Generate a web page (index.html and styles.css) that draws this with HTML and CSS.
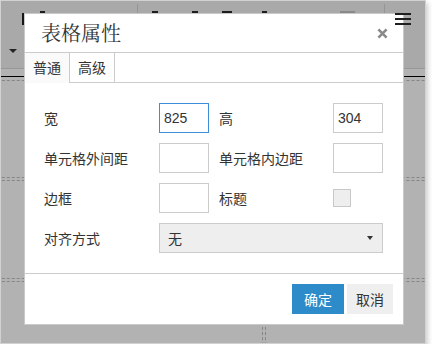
FILE: index.html
```html
<!DOCTYPE html>
<html lang="zh-CN">
<head>
<meta charset="utf-8">
<title>表格属性</title>
<link rel="stylesheet" href="styles.css">
</head>
<body>
<div class="editor">
  <div class="toolbar">
    <div class="tb-left">
      <span class="ibar"></span>
      <span class="caret"></span>
    </div>
    <span class="mark m1"></span>
    <span class="sep s1"></span>
    <span class="mark m2"></span>
    <span class="mark m3"></span>
    <span class="mark m4"></span>
    <span class="mark m5"></span>
    <span class="mark m6"></span>
    <span class="sep s2"></span>
    <span class="menu-icon"><i></i><i></i><i></i></span>
  </div>
  <div class="content">
    <div class="hr"></div>
    <table class="bg-table">
      <tr class="r1"><td class="c1"></td><td class="c2"></td></tr>
      <tr class="r2"><td></td><td></td></tr>
      <tr class="r3"><td></td><td></td></tr>
    </table>
  </div>
  <div class="mask"></div>
  <div class="dialog">
    <div class="dlg-head">
      <span class="dlg-title">表格属性</span>
      <span class="dlg-close"><svg width="11" height="11" viewBox="0 0 11 11"><path d="M1.4 1.4L9.6 9.6M9.6 1.4L1.4 9.6" stroke="#8a8a8a" stroke-width="2.6"/></svg></span>
    </div>
    <div class="tabs">
      <span class="tab active">普通</span>
      <span class="tab">高级</span>
    </div>
    <div class="dlg-body">
      <div class="form">
        <label class="lbl">宽</label>
        <input class="inp focus" value="825">
        <label class="lbl l2">高</label>
        <input class="inp" value="304">

        <label class="lbl">单元格外间距</label>
        <input class="inp" value="">
        <label class="lbl l2">单元格内边距</label>
        <input class="inp" value="">

        <label class="lbl">边框</label>
        <input class="inp" value="">
        <label class="lbl l2">标题</label>
        <span class="chk"></span>

        <label class="lbl">对齐方式</label>
        <div class="select"><span>无</span><span class="sel-caret"></span></div>
      </div>
    </div>
    <div class="dlg-foot">
      <button class="btn primary">确定</button>
      <button class="btn">取消</button>
    </div>
  </div>
</div>
</body>
</html>
```

FILE: styles.css
```css
* { box-sizing: border-box; }
html, body { margin: 0; padding: 0; background: #fff; }
body {
  font-family: "Noto Sans CJK SC", "Liberation Sans", sans-serif;
  font-size: 14px;
  color: #333;
}

.editor {
  position: relative;
  width: 426px;
  height: 344px;
  border: 1px solid #d2d2d2;
  overflow: hidden;
  background: #fff;
  box-shadow: 2px 3px 5px rgba(0, 0, 0, 0.2);
}

/* toolbar behind the mask */
.toolbar {
  display: flex;
  align-items: flex-start;
  height: 68px;
  background: #f3f3f3;
  border-bottom: 1px solid #d9d9d9;
}
.tb-left { display: flex; flex-direction: column; width: 24px; }
.ibar { margin: 12px 0 0 21px; width: 2px; height: 12px; background: #222; }
.caret {
  margin: 24px 0 0 8px;
  width: 0; height: 0;
  border-top: 4px solid #333;
  border-left: 4px solid transparent;
  border-right: 4px solid transparent;
}
.mark { margin-top: 10px; height: 10px; background: #2a2a2a; }
.m1 { margin-left: 15px; width: 5px; }
.m2 { margin-left: 14px; width: 6px; }
.m3 { margin-left: 34px; width: 6px; }
.m4 { margin-left: 24px; width: 10px; }
.m5 { margin-left: 30px; width: 5px; }
.m6 { margin-left: 73px; width: 15px; background: #c4c4c4; }
.sep { margin-top: 3px; width: 1px; height: 30px; background: #d6d6d6; }
.s1 { margin-left: 92px; }
.s2 { margin-left: 29px; }
.menu-icon {
  position: relative;
  z-index: 5;
  display: flex;
  flex-direction: column;
  gap: 3px;
  margin: 12px 0 0 10px;
  width: 16px;
}
.menu-icon i { display: block; height: 2px; background: #1f1f1f; }

/* document content behind the mask */
.content { padding-top: 7px; }
.hr { height: 1px; background: #000; margin-bottom: 1px; }
.bg-table {
  border-collapse: separate;
  border-spacing: 2px;
  table-layout: fixed;
  width: 487px;
  margin-left: -21px;
}
.bg-table td { border: 1px dashed #c0c0c0; padding: 0; }
.c1 { width: 281px; }
.c2 { width: 200px; }
.r1 { height: 98px; }
.r2 { height: 99px; }
.r3 { height: 100px; }

.mask {
  position: absolute;
  inset: 0;
  background: rgba(0, 0, 0, 0.3);
  z-index: 1;
}

/* dialog */
.dialog {
  position: absolute;
  left: 23px;
  top: 12px;
  z-index: 2;
  width: 380px;
  height: 312px;
  display: flex;
  flex-direction: column;
  background: #fff;
  border: 1px solid #c9c9c9;
}
.dlg-head {
  height: 39px;
  flex: none;
  display: flex;
  align-items: center;
  justify-content: space-between;
  padding: 0 15px 0 16px;
  border-bottom: 1px solid #ccc;
}
.dlg-title {
  font-family: "Noto Serif CJK SC", "Noto Sans CJK SC", serif;
  font-size: 20px;
  line-height: 1;
  color: #333;
}
.dlg-close { display: flex; }

.tabs {
  height: 30px;
  flex: none;
  display: flex;
  align-items: flex-start;
  border-bottom: 1px solid #ccc;
}
.tab {
  width: 45px;
  height: 29px;
  border-right: 1px solid #ccc;
  text-align: center;
  line-height: 29px;
  font-size: 14px;
  color: #333;
}
.tab.active {
  height: 30px;
  margin-bottom: -1px;
  background: #fafafa;
}

.dlg-body {
  flex: 1;
  padding: 20px 0 0 19px;
}
.form {
  display: grid;
  grid-template-columns: 115px 50px 124px 50px;
  grid-auto-rows: 30px;
  row-gap: 10px;
  align-items: center;
}
.lbl { line-height: 20px; color: #333; }
.l2 { padding-left: 10px; }
.inp {
  width: 50px;
  height: 30px;
  margin: 0;
  border: 1px solid #ccc;
  padding: 0 4px;
  font-family: "Liberation Sans", "Noto Sans CJK SC", sans-serif;
  font-size: 14px;
  color: #333;
  background: #fff;
  outline: none;
}
.inp.focus { border-color: #3d8ed6; }
.chk {
  width: 18px;
  height: 18px;
  border: 1px solid #c8c8c8;
  background: #eee;
}
.select {
  grid-column: 2 / 5;
  height: 30px;
  display: flex;
  align-items: center;
  justify-content: space-between;
  padding: 0 9px 0 8px;
  background: #eee;
  border: 1px solid #ccc;
  color: #333;
}
.sel-caret {
  width: 0; height: 0;
  border-top: 4px solid #333;
  border-left: 3.5px solid transparent;
  border-right: 3.5px solid transparent;
}

.dlg-foot {
  height: 51px;
  flex: none;
  display: flex;
  justify-content: flex-end;
  align-items: center;
  gap: 3px;
  padding: 0 10px;
  border-top: 1px solid #ccc;
}
.btn {
  height: 30px;
  margin: 0;
  padding: 0;
  border: 0;
  font-family: "Noto Sans CJK SC", sans-serif;
  font-size: 14px;
  width: 46px;
  background: #efefef;
  color: #333;
}
.btn.primary { width: 52px; background: #2e8bc9; color: #fff; }
```
